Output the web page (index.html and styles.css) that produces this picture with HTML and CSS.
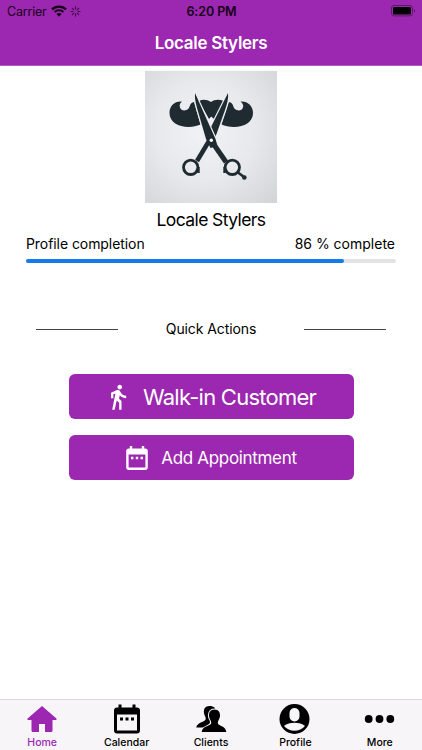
FILE: index.html
```html
<!DOCTYPE html>
<html lang="en">
<head>
    <meta charset="UTF-8">
    <meta name="viewport" content="width=device-width, initial-scale=1.0">
    <title>Locale Stylers</title>
    <link rel="stylesheet" href="styles.css">
</head>
<body>

    <header class="header">
        <div class="status-bar">
            <div class="status-left">
                <span class="carrier">Carrier</span>
                <svg class="wifi" viewBox="0 0 16 12">
                    <path d="M1 4.4a10 10 0 0 1 14 0" fill="none" stroke="#160019" stroke-width="2.3"/>
                    <path d="M3.6 7.1a6.3 6.3 0 0 1 8.8 0" fill="none" stroke="#160019" stroke-width="2.1"/>
                    <path d="M8 11.7 5.5 9.1a3.6 3.6 0 0 1 5 0z" fill="#160019"/>
                </svg>
                <svg class="spinner" viewBox="0 0 12 12" stroke="#3c0a46" stroke-width="1.2" stroke-linecap="round">
                    <path d="M6 1v2.4M6 8.6V11M1 6h2.4M8.6 6H11"/>
                    <path d="M2.5 2.5l1.7 1.7M7.8 7.8l1.7 1.7M2.5 9.5l1.7-1.7M7.8 4.2l1.7-1.7"/>
                </svg>
            </div>
            <div class="time">6:20 PM</div>
            <svg class="battery" viewBox="0 0 25 12">
                <rect x=".5" y=".5" width="21" height="10.4" rx="2.6" fill="none" stroke="#5c1768"/>
                <rect x="2" y="2" width="18" height="7.4" rx="1.2" fill="#000"/>
                <path d="M23 4v3.6c1.5-.7 1.5-2.9 0-3.6z" fill="#5c1768"/>
            </svg>
        </div>
        <h1 class="title">Locale Stylers</h1>
    </header>

    <main class="content">
        <!-- Salon logo: moustache behind a pair of scissors -->
        <svg class="logo" viewBox="0 0 132 132">
            <defs>
                <radialGradient id="logoBg" cx="45%" cy="45%" r="75%">
                    <stop offset="0" stop-color="#f1f2f5"/>
                    <stop offset=".5" stop-color="#e7e9ec"/>
                    <stop offset="1" stop-color="#d3d6d9"/>
                </radialGradient>
            </defs>
            <rect width="132" height="132" fill="url(#logoBg)"/>
            <g fill="#1f2b31">
                <path d="M37 30.5C29 30 24.5 35 24.5 42c0 9 9 14 19 14 5 0 8-1 12-2.500L49 31c-5 1-3.500 5-6 7-3 2.500-7 1.500-8-1.500-.8-2.500 0-4.500 2-6z"/>
                <path d="M95.500 30.500C103 30 108 35 108 42c0 9-9 14-19 14-5 0-9-1-12.500-2.500L84 31c5 1 3.500 5 6 7 3 2.500 7 1.500 8-1.500.8-2.500-.5-4.500-2.500-6z"/>
                <path d="M54 30c4-2 8-1.500 12 1 3.500-2.500 8-3 12.500-1L69 48l-2.800-2.500L64 48z"/>
            </g>
            <g fill="#1f2b31" stroke="#eceef1" stroke-width="2.400" paint-order="stroke">
                <path d="M83 22c.8 5-1 11-3 17l-8.500 24-2 4-4.500-9z"/>
                <path d="M50 22c-.5 5 .5 9 2 15l9 31 4.500 9 7-2-2-7z"/>
            </g>
            <g fill="none" stroke="#1f2b31">
                <path d="M64 70 52 90" stroke-width="4.500"/>
                <path d="M68.500 73 81 91" stroke-width="5"/>
                <circle cx="45.700" cy="96.300" r="7.200" stroke-width="2.800"/>
                <circle cx="87.300" cy="96.300" r="7.200" stroke-width="2.800"/>
                <path d="M93 101.500l6 4.500" stroke-width="2.600"/>
                <path d="M53.500 96v6M79.500 96v6" stroke-width="2.400"/>
            </g>
            <circle cx="99.300" cy="106.500" r="2.300" fill="#1f2b31"/>
            <circle cx="66.300" cy="69.300" r="1.700" fill="#fff"/>
        </svg>

        <h2 class="shop-name">Locale Stylers</h2>

        <section class="completion">
            <div class="completion-labels">
                <span class="completion-title">Profile completion</span>
                <span class="completion-value">86 % complete</span>
            </div>
            <div class="progress">
                <div class="progress-fill" style="width: 86%"></div>
            </div>
        </section>

        <div class="divider">
            <span class="line"></span>
            <span class="divider-text">Quick Actions</span>
            <span class="line"></span>
        </div>

        <section class="actions">
            <button class="action walk-in">
                <svg class="walk-icon" viewBox="0 0 24 24" fill="#fff">
                    <path d="M13.5 5.5c1.1 0 2-.9 2-2s-.9-2-2-2-2 .9-2 2 .9 2 2 2zM9.8 8.9L7 23h2.1l1.8-8 2.1 2v6h2v-7.5l-2.1-2 .6-3C14.8 12 16.8 13 19 13v-2c-1.9 0-3.5-1-4.3-2.4l-1-1.6c-.4-.6-1-1-1.7-1-.3 0-.5.1-.8.1L6 8.3V13h2V9.6l1.8-.7"/>
                </svg>
                <span class="walk-text">Walk-in Customer</span>
            </button>
            <button class="action appointment">
                <svg class="date-icon" viewBox="3 1 18 20" fill="#fff">
                    <path d="M9 10H7v2h2v-2zm4 0h-2v2h2v-2zm4 0h-2v2h2v-2zm2-7h-1V1h-2v2H8V1H6v2H5c-1.1 0-2 .9-2 2v14c0 1.1.9 2 2 2h14c1.1 0 2-.9 2-2V5c0-1.1-.9-2-2-2zm0 16H5V8h14v11z"/>
                </svg>
                <span class="appointment-text">Add Appointment</span>
            </button>
        </section>
    </main>

    <nav class="tabs">
        <a class="tab active">
            <svg class="tab-icon" viewBox="0 0 32 32" fill="currentColor">
                <path d="M16 3 1.6 15.5c-.6.7-.3 1.500.6 1.500H5.500v10.500c0 .9.6 1.500 1.500 1.500h6v-8h6v8h6c.9 0 1.500-.6 1.500-1.500V17h3.300c.9 0 1.200-.8.6-1.500z"/>
            </svg>
            <span class="tab-label">Home</span>
        </a>
        <a class="tab">
            <svg class="tab-icon" viewBox="0 0 32 32" fill="currentColor">
                <path d="M12 14.500H9v3h3zm5.500 0h-3v3h3zm5.500 0h-3v3h3zM26 4.500h-1.500V1.500h-3v3h-11v-3h-3v3H6c-1.600 0-3 1.300-3 3V27.500C3 29.200 4.300 30.500 6 30.500h20c1.700 0 3-1.300 3-3V7.500c0-1.700-1.300-3-3-3zm0 23H6V11.500h20z"/>
            </svg>
            <span class="tab-label">Calendar</span>
        </a>
        <a class="tab">
            <svg class="tab-icon" viewBox="0 0 32 32" fill="currentColor">
                <path d="M14.500 3C10 3 8.500 6 9 10c.3 2.500 1.800 3.800 1.800 5.800 0 3.200-8.300 3-9.600 8.700h12L20 5c-1.500-1.500-3.500-2-5.500-2z"/>
                <path stroke="#f7f5f7" stroke-width="2" paint-order="stroke" d="M19.500 6.500c-4.300 0-5.800 3-5.500 6.800.2 2.800 2.300 4.200 2.300 6.500 0 3.700-9 2.500-9.600 9.200h24.600c-.6-6.700-8.500-5.500-8.500-9.200 0-2.300 2-3.700 2.200-6.500.3-3.800-1.200-6.800-5.500-6.800z"/>
            </svg>
            <span class="tab-label">Clients</span>
        </a>
        <a class="tab">
            <svg class="tab-icon" viewBox="0 0 32 32">
                <circle cx="15.500" cy="16" r="15" fill="currentColor"/>
                <rect x="10.500" y="5" width="10" height="13.500" rx="5" fill="#f7f5f7"/>
                <path d="M5 23c5-4.200 16-4.200 21 0-5 6.300-16 6.300-21 0z" fill="#f7f5f7"/>
            </svg>
            <span class="tab-label">Profile</span>
        </a>
        <a class="tab">
            <svg class="tab-icon" viewBox="0 0 32 32" fill="currentColor">
                <circle cx="4.700" cy="16" r="3.900"/>
                <circle cx="15.500" cy="16" r="3.900"/>
                <circle cx="26.300" cy="16" r="3.900"/>
            </svg>
            <span class="tab-label">More</span>
        </a>
    </nav>

</body>
</html>
```
FILE: styles.css
```css
* {
    box-sizing: border-box;
}

body {
    margin: 0;
    height: 750px;
    display: flex;
    flex-direction: column;
    font-family: Inter, "Liberation Sans", sans-serif;
    color: #000;
    background-color: #fff;
    overflow: hidden;
}

/* Header */
.header {
    height: 66px;
    background-color: #9c27b0;
    border-bottom: 1px solid #b45bc4;
}

.status-bar {
    height: 22px;
    padding: 0 6px 0 7px;
    display: grid;
    grid-template-columns: 1fr auto 1fr;
    align-items: center;
    color: #160019;
}

.status-left {
    display: flex;
    align-items: center;
}

.carrier {
    font-size: 12.5px;
    letter-spacing: -0.2px;
    width: 44px;
    white-space: nowrap;
}

.wifi {
    width: 16px;
    height: 12px;
}

.spinner {
    width: 11px;
    height: 11px;
    margin-left: 3px;
}

.time {
    font-size: 12.5px;
    font-weight: 600;
    letter-spacing: -0.1px;
}

.battery {
    width: 25px;
    height: 12px;
    justify-self: end;
}

.title {
    margin: 0;
    line-height: 42px;
    font-size: 17px;
    font-weight: 600;
    letter-spacing: -0.28px;
    text-align: center;
    color: #fff;
}

/* Content */
.content {
    flex: 1;
    display: flex;
    flex-direction: column;
    align-items: center;
    padding-top: 5px;
}

.logo {
    width: 132px;
    height: 132px;
}

.shop-name {
    margin: 5px 0 0;
    font-size: 17.5px;
    font-weight: 400;
    letter-spacing: -0.6px;
    line-height: 24px;
}

.completion {
    width: 370px;
}

.completion-labels {
    display: flex;
    justify-content: space-between;
    font-size: 14px;
    letter-spacing: -0.07px;
    line-height: 24px;
}

.completion-value {
    letter-spacing: 0;
    margin-right: 1px;
}

.progress {
    height: 4px;
    margin-top: 3px;
    border-radius: 2px;
    background-color: #e3e3e6;
}

.progress-fill {
    height: 4px;
    border-radius: 2px;
    background-color: #157aeb;
}

.divider {
    width: 350px;
    margin-top: 56px;
    display: flex;
    justify-content: space-between;
    align-items: center;
    font-size: 14px;
    letter-spacing: -0.1px;
    line-height: 20px;
}

.line {
    width: 82px;
    height: 1px;
    background-color: #444;
}

.actions {
    width: 285px;
    margin-top: 35px;
    display: flex;
    flex-direction: column;
    gap: 16px;
}

.action {
    height: 45px;
    padding: 0;
    border: none;
    border-radius: 6px;
    display: flex;
    justify-content: center;
    align-items: center;
    font-family: inherit;
    color: #fff;
    background-color: #9c27b0;
}

.walk-icon {
    width: 28px;
    height: 28px;
    margin-right: 11px;
}

.walk-in {
    padding-right: 2px;
}

.walk-text {
    font-size: 22px;
    letter-spacing: -0.75px;
}

.date-icon {
    width: 22px;
    height: 24px;
    margin-right: 13px;
}

.appointment {
    padding-left: 1px;
}

.appointment-text {
    font-size: 17px;
    letter-spacing: -0.33px;
}

/* Bottom tabs */
.tabs {
    height: 51px;
    display: grid;
    grid-template-columns: repeat(5, 1fr);
    border-top: 1px solid #d9d7d9;
    background-color: #f7f5f7;
}

.tab {
    display: flex;
    flex-direction: column;
    align-items: center;
    padding-top: 3px;
}

.active {
    color: #9c27b0;
}

.tab-icon {
    width: 32px;
    height: 32px;
}

.tab-label {
    font-size: 10.5px;
    font-weight: 500;
    line-height: 16px;
}
```
